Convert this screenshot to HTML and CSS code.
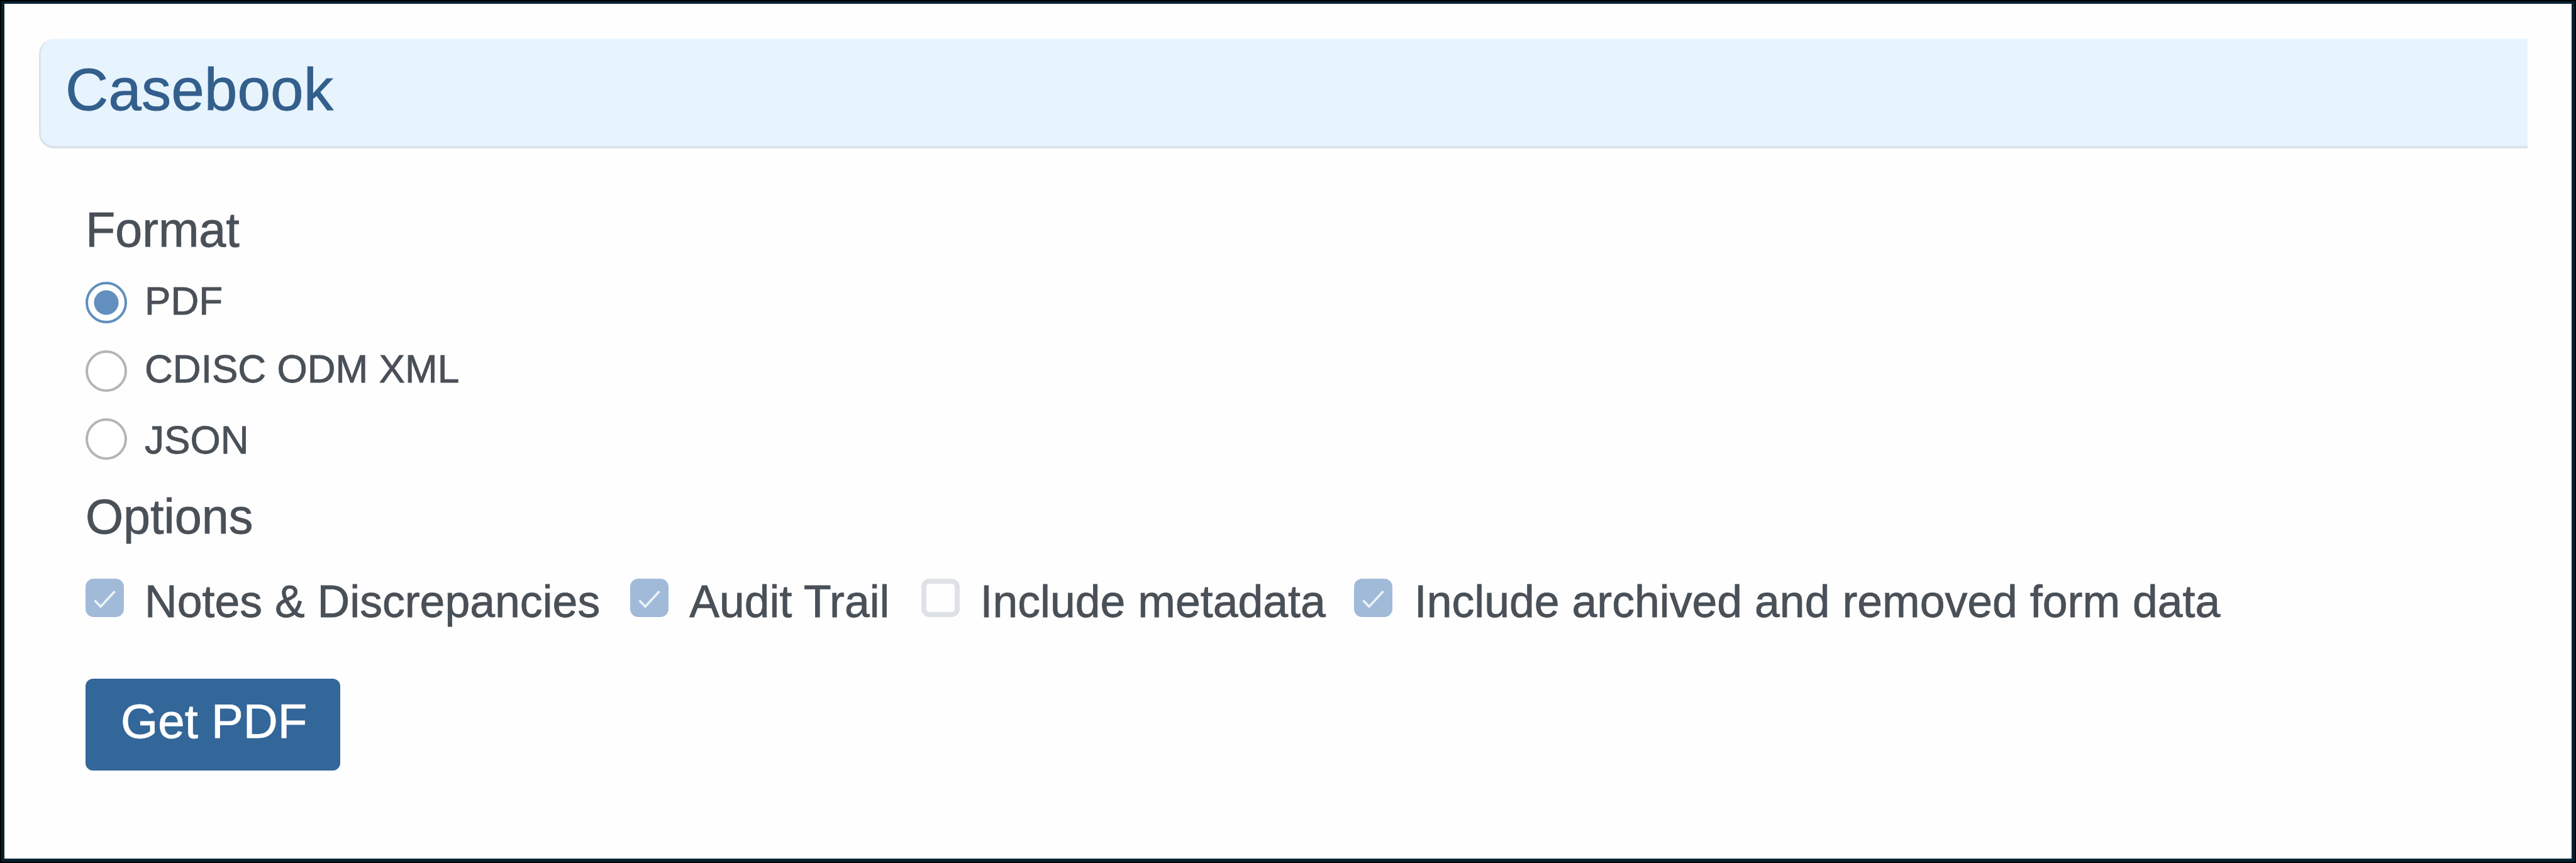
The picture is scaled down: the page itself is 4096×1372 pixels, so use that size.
FILE: index.html
```html
<!DOCTYPE html>
<html lang="en">
<head>
    <meta charset="UTF-8">
    <meta name="viewport" content="width=device-width, initial-scale=1.0">
    <title>Casebook</title>
    <link rel="stylesheet" href="styles.css">
</head>
<body>
    <main class="page">
        <h1 class="panel-header">Casebook</h1>

        <form class="panel-body">
            <h2 class="group-title">Format</h2>
            <div class="radio-list">
                <label class="radio-row">
                    <input type="radio" name="format" value="pdf" checked>
                    <span>PDF</span>
                </label>
                <label class="radio-row">
                    <input type="radio" name="format" value="odm">
                    <span>CDISC ODM XML</span>
                </label>
                <label class="radio-row">
                    <input type="radio" name="format" value="json">
                    <span>JSON</span>
                </label>
            </div>

            <h2 class="group-title options-title">Options</h2>
            <div class="check-list">
                <label class="check-item">
                    <svg class="box checked" viewBox="0 0 61 61"><path d="M14.5 34.5 L24 44.5 L46.5 20"/></svg>
                    <span>Notes &amp; Discrepancies</span>
                </label>
                <label class="check-item">
                    <svg class="box checked" viewBox="0 0 61 61"><path d="M14.5 34.5 L24 44.5 L46.5 20"/></svg>
                    <span>Audit Trail</span>
                </label>
                <label class="check-item">
                    <span class="box"></span>
                    <span>Include metadata</span>
                </label>
                <label class="check-item">
                    <svg class="box checked" viewBox="0 0 61 61"><path d="M14.5 34.5 L24 44.5 L46.5 20"/></svg>
                    <span>Include archived and removed form data</span>
                </label>
            </div>

            <button type="button" class="btn">Get PDF</button>
        </form>
    </main>
</body>
</html>
```
FILE: styles.css
```css
* {
    box-sizing: border-box;
}

body {
    margin: 0;
    height: 1372px;
    border: 2px solid #000;
    background-color: #fefefe;
    font-family: "Liberation Sans", Arial, sans-serif;
    color: #495057;
    -webkit-text-stroke: 0.8px;
    overflow: hidden;
}

.page {
    height: 1368px;
    border: 5px solid #04222f;
    border-top-width: 4px;
    padding: 56px 70px 0 55px;
}

.panel-header {
    margin: 0;
    height: 174px;
    padding: 0 0 10px 39px;
    border-left: 3px solid #dee2e6;
    border-bottom: 4px solid #dee2e6;
    border-radius: 24px 0 0 24px;
    background-color: #e7f4fe;
    color: #335f8c;
    font-size: 94.6px;
    font-weight: normal;
    line-height: 160px;
}

.panel-body {
    display: flex;
    flex-direction: column;
    align-items: flex-start;
    padding: 79px 0 0 74px;
}

.group-title {
    margin: 0;
    font-size: 77.3px;
    font-weight: normal;
    line-height: 100px;
}

.options-title {
    margin-top: 19px;
}

.radio-list {
    margin-top: 12px;
}

.radio-row {
    display: flex;
    align-items: center;
    gap: 28px;
    height: 108.4px;
    font-size: 62.1px;
    line-height: 80px;
}

.radio-row span {
    padding-bottom: 5px;
}

.radio-row:last-child span {
    padding: 4px 0 0;
}

.radio-row input {
    appearance: none;
    width: 66px;
    height: 66px;
    margin: 0;
    border: 4px solid #b5b5b5;
    border-radius: 50%;
    background-color: #fff;
}

.radio-row input:checked {
    border-color: #5f8fbf;
    background: radial-gradient(circle, #628fbe 19px, #fff 20px);
}

.check-list {
    display: flex;
    gap: 48px;
    margin-top: 39px;
}

.check-item {
    display: flex;
    align-items: center;
    gap: 33px;
    height: 80px;
    font-size: 71.6px;
    line-height: 80px;
    white-space: nowrap;
}

.check-item:nth-child(3) {
    margin-left: 2px;
    margin-right: -3px;
}

.check-item:last-child {
    gap: 35px;
}

.check-item span:last-child {
    padding-top: 12px;
}

.box {
    flex: none;
    width: 61px;
    height: 61px;
    border: 8px solid #dee2e6;
    border-radius: 13px;
}

.box.checked {
    border: 0;
    background-color: #a1bad8;
}

.box path {
    fill: none;
    stroke: #edf3f9;
    stroke-width: 3.5;
}

.btn {
    width: 405px;
    height: 146px;
    margin-top: 89px;
    padding: 0 0 10px 56px;
    border: 0;
    border-radius: 12px;
    background-color: #336699;
    color: #fff;
    font-family: inherit;
    font-size: 76.2px;
    line-height: 136px;
    text-align: left;
}
```
